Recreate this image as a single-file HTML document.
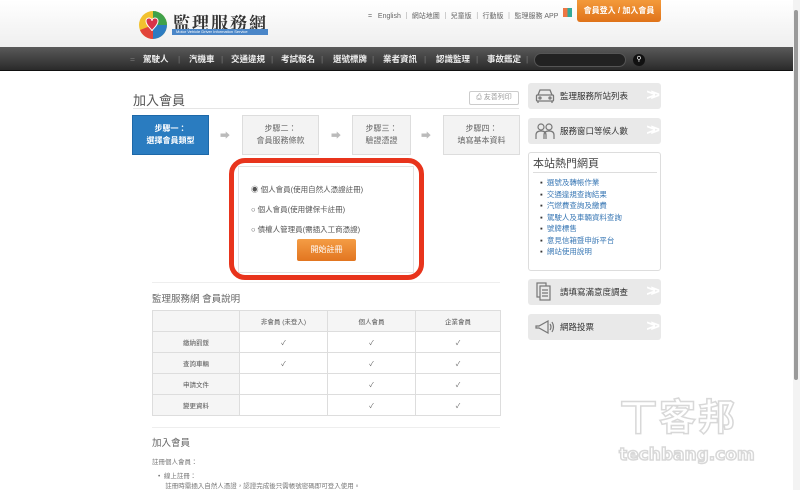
<!DOCTYPE html>
<html><head><meta charset="utf-8">
<style>
*{margin:0;padding:0;box-sizing:border-box}
body{width:800px;height:490px;overflow:hidden;background:#fff;font-family:"Liberation Sans","Noto Sans CJK TC",sans-serif;color:#555;position:relative;font-size:8px}
.abs{position:absolute}
.hdr{left:0;top:0;width:793px;height:47px;background:linear-gradient(#fff,#efefef)}
.nav{left:0;top:47px;width:793px;height:24px;background:linear-gradient(#5a5a5a,#2a2a2a);border-bottom:1px solid #111;color:#eee;font-size:8.5px;font-weight:bold;line-height:24px}
.nav span{position:absolute}
.sep{color:#777;font-weight:normal}
.step{background:#f3f3f3;border:1px solid #ddd;text-align:center;font-size:8px;line-height:12px;padding-top:7px;color:#666}
.rb{background:#e9e9e9;border-radius:3px;height:26px;font-size:8.5px;color:#333;line-height:26px}
.chev{position:absolute;right:6px;top:0;color:#fff;font-size:16px;font-weight:bold;letter-spacing:-5px}
table{border-collapse:collapse;font-size:6.5px;color:#555;table-layout:fixed}
td{border:1px solid #ddd;text-align:center;height:21px}
</style></head><body>
<div class="abs hdr"></div>
<svg class="abs" style="left:137px;top:10px" width="32" height="30" viewBox="0 0 32 30">
<circle cx="16" cy="15" r="14" fill="#f2c12e"/>
<path d="M16 1 A14 14 0 0 1 30 15 L16 15Z" fill="#3fa14a"/>
<path d="M30 15 A14 14 0 0 1 16 29 L16 15Z" fill="#2d7cc1"/>
<path d="M16 29 A14 14 0 0 1 3 20 L16 15Z" fill="#e2443a"/>
<path d="M9 11 C9 7 15 7 15 11 C15 7 21 7 21 11 C21 16 15 19 15 21 C15 19 9 16 9 11Z" fill="#d9334a" stroke="#fff" stroke-width="1"/>
</svg>
<div class="abs" style="left:173px;top:9px;font-family:'Noto Serif CJK SC',serif;font-size:17px;font-weight:bold;color:#333;letter-spacing:2px">監理服務網</div>
<div class="abs" style="left:172px;top:29px;width:96px;height:6px;background:#4a86c8;color:#fff;font-size:4px;line-height:6px;padding-left:4px">Motor Vehicle Driver Information Service</div>
<div class="abs" style="left:368px;top:11px;font-size:7px;color:#666">=&nbsp;&nbsp;&nbsp;English ｜ 網站地圖 ｜ 兒童版 ｜ 行動版 ｜ 監理服務 APP</div>
<div class="abs" style="left:563px;top:8px;width:9px;height:9px;background:linear-gradient(90deg,#e74 50%,#3a9 50%)"></div>
<div class="abs" style="left:577px;top:0;width:84px;height:22px;background:linear-gradient(#f39a3b,#e0731a);border-radius:0 0 3px 3px;color:#fff;font-size:8px;line-height:22px;text-align:center;font-weight:bold">會員登入 / 加入會員</div>
<div class="abs nav">
<span style="left:130px" class="sep">=</span>
<span style="left:143px">駕駛人</span><span class="sep" style="left:178px">|</span>
<span style="left:189px">汽機車</span><span class="sep" style="left:221px">|</span>
<span style="left:231px">交通違規</span><span class="sep" style="left:271px">|</span>
<span style="left:281px">考試報名</span><span class="sep" style="left:321px">|</span>
<span style="left:333px">選號標牌</span><span class="sep" style="left:372px">|</span>
<span style="left:383px">業者資訊</span><span class="sep" style="left:424px">|</span>
<span style="left:436px">認識監理</span><span class="sep" style="left:476px">|</span>
<span style="left:487px">事故鑑定</span><span class="sep" style="left:526px">|</span>
</div>
<div class="abs" style="left:534px;top:53px;width:92px;height:14px;background:#222;border-radius:7px;border:1px solid #555"></div>
<div class="abs" style="left:633px;top:54px;width:12px;height:12px;background:#111;border-radius:50%;color:#fff;font-size:7px;line-height:12px;text-align:center">&#9906;</div>
<div class="abs" style="left:793px;top:0;width:7px;height:490px;background:#f3f3f3"></div>
<div class="abs" style="left:794px;top:10px;width:4px;height:370px;background:#9a9a9a;border-radius:2px"></div>

<div class="abs" style="left:133px;top:90px;font-size:13px;color:#555">加入會員</div>
<div class="abs" style="left:133px;top:108px;width:386px;height:1px;background:#e5e5e5"></div>
<div class="abs" style="left:469px;top:91px;width:50px;height:14px;border:1px solid #ccc;border-radius:2px;font-size:7px;color:#999;line-height:12px;text-align:center">⎙ 友善列印</div>

<div class="abs step" style="left:132px;top:115px;width:77px;height:40px;background:#2a7cc0;border-color:#1d68a8;color:#fff;font-weight:bold">步驟一：<br>選擇會員類型</div>
<div class="abs" style="left:220px;top:127px;color:#bbb;font-size:10px">➡</div>
<div class="abs step" style="left:242px;top:115px;width:77px;height:40px">步驟二：<br>會員服務條款</div>
<div class="abs" style="left:331px;top:127px;color:#bbb;font-size:10px">➡</div>
<div class="abs step" style="left:352px;top:115px;width:59px;height:40px">步驟三：<br>驗證憑證</div>
<div class="abs" style="left:421px;top:127px;color:#bbb;font-size:10px">➡</div>
<div class="abs step" style="left:443px;top:115px;width:77px;height:40px">步驟四：<br>填寫基本資料</div>

<div class="abs" style="left:238px;top:166px;width:176px;height:107px;border:1px solid #e3e3e3;background:#fff"></div>
<div class="abs" style="left:229px;top:158px;width:195px;height:122px;border:5px solid #e8341c;border-radius:16px"></div>
<div class="abs" style="left:251px;top:180px;font-size:7.5px;color:#555;line-height:20px">◉ 個人會員(使用自然人憑證註冊)<br>○ 個人會員(使用健保卡註冊)<br>○ 債權人管理員(需插入工商憑證)</div>
<div class="abs" style="left:297px;top:239px;width:59px;height:22px;background:linear-gradient(#f49d45,#e27520);border-radius:2px;color:#fff;font-size:8px;line-height:22px;text-align:center">開始註冊</div>

<div class="abs" style="left:152px;top:282px;width:348px;height:1px;background:#eee"></div>
<div class="abs" style="left:152px;top:291px;font-size:9.5px;color:#666">監理服務網 會員說明</div>
<table class="abs" style="left:152px;top:310px;width:348px">
<colgroup><col style="width:87px"><col style="width:88px"><col style="width:88px"><col style="width:85px"></colgroup>
<tr style="background:#f5f5f5"><td></td><td>非會員 (未登入)</td><td>個人會員</td><td>企業會員</td></tr>
<tr><td style="background:#f5f5f5">繳納罰鍰</td><td>✓</td><td>✓</td><td>✓</td></tr>
<tr><td style="background:#f5f5f5">查詢車輛</td><td>✓</td><td>✓</td><td>✓</td></tr>
<tr><td style="background:#f5f5f5">申請文件</td><td></td><td>✓</td><td>✓</td></tr>
<tr><td style="background:#f5f5f5">變更資料</td><td></td><td>✓</td><td>✓</td></tr>
</table>
<div class="abs" style="left:152px;top:427px;width:348px;height:1px;background:#eee"></div>
<div class="abs" style="left:152px;top:435px;font-size:9.5px;color:#666">加入會員</div>
<div class="abs" style="left:152px;top:456px;font-size:6.5px;color:#777">註冊個人會員：</div>
<div class="abs" style="left:158px;top:472px;font-size:6.5px;color:#777;line-height:10px">•&nbsp;&nbsp;線上註冊：<br>&nbsp;&nbsp;&nbsp;&nbsp;註冊時需插入自然人憑證，認證完成後只需帳號密碼即可登入使用。</div>

<div class="abs rb" style="left:528px;top:83px;width:133px;padding-left:32px">監理服務所站列表<span class="chev">&gt;&gt;</span></div>
<svg class="abs" style="left:535px;top:88px" width="20" height="16" viewBox="0 0 20 16" fill="none" stroke="#777" stroke-width="1.3"><path d="M3 7 L5 2 H15 L17 7"/><rect x="1.5" y="7" width="17" height="6" rx="1"/><circle cx="5" cy="10" r="1"/><circle cx="15" cy="10" r="1"/><path d="M3 13v2M17 13v2"/></svg>
<div class="abs rb" style="left:528px;top:118px;width:133px;padding-left:32px">服務窗口等候人數<span class="chev">&gt;&gt;</span></div>
<svg class="abs" style="left:535px;top:122px" width="20" height="18" viewBox="0 0 20 18" fill="none" stroke="#777" stroke-width="1.2"><circle cx="6" cy="5" r="3"/><circle cx="14" cy="5" r="3"/><path d="M1 17v-4q0-4 5-4t5 4v4M9 17v-4q0-4 5-4t5 4v4"/></svg>
<div class="abs" style="left:528px;top:152px;width:133px;height:119px;border:1px solid #ddd;border-radius:3px"></div>
<div class="abs" style="left:533px;top:155px;font-size:11px;color:#444">本站熱門網頁</div>
<div class="abs" style="left:533px;top:172px;width:124px;height:1px;background:#ddd"></div>
<div class="abs" style="left:540px;top:177px;font-size:7.5px;color:#3a78b5;line-height:11.5px">
<span style="color:#333">▪</span>&nbsp;&nbsp;選號及轉帳作業<br><span style="color:#333">▪</span>&nbsp;&nbsp;交通違規查詢結果<br><span style="color:#333">▪</span>&nbsp;&nbsp;汽燃費查詢及繳費<br><span style="color:#333">▪</span>&nbsp;&nbsp;駕駛人及車輛資料查詢<br><span style="color:#333">▪</span>&nbsp;&nbsp;號牌標售<br><span style="color:#333">▪</span>&nbsp;&nbsp;意見信箱暨申訴平台<br><span style="color:#333">▪</span>&nbsp;&nbsp;網站使用說明</div>
<div class="abs rb" style="left:528px;top:279px;width:133px;padding-left:32px">請填寫滿意度調查<span class="chev">&gt;&gt;</span></div>
<svg class="abs" style="left:536px;top:282px" width="16" height="20" viewBox="0 0 16 20" fill="none" stroke="#777" stroke-width="1.2"><rect x="1" y="1" width="9" height="14"/><rect x="4" y="4" width="10" height="14" fill="#e9e9e9"/><path d="M6 8h6M6 11h6M6 14h6"/></svg>
<div class="abs rb" style="left:528px;top:314px;width:133px;padding-left:32px">網路投票<span class="chev">&gt;&gt;</span></div>
<svg class="abs" style="left:535px;top:320px" width="20" height="14" viewBox="0 0 20 14" fill="none" stroke="#777" stroke-width="1.2"><path d="M1 6h3l9-5v12l-9-5H1z"/><path d="M15 4q2 3 0 6M17 2q3 5 0 10"/></svg>

<div class="abs" style="left:620px;top:398px;font-size:37px;font-weight:bold;color:#fff;-webkit-text-stroke:1.5px #d8d8d8;letter-spacing:2px;line-height:40px">丅客邦</div>
<div class="abs" style="left:619px;top:445px;font-size:17px;font-weight:bold;color:#fff;-webkit-text-stroke:1.5px #d8d8d8;font-family:'DejaVu Sans',sans-serif">techbang.com</div>
</body></html>
